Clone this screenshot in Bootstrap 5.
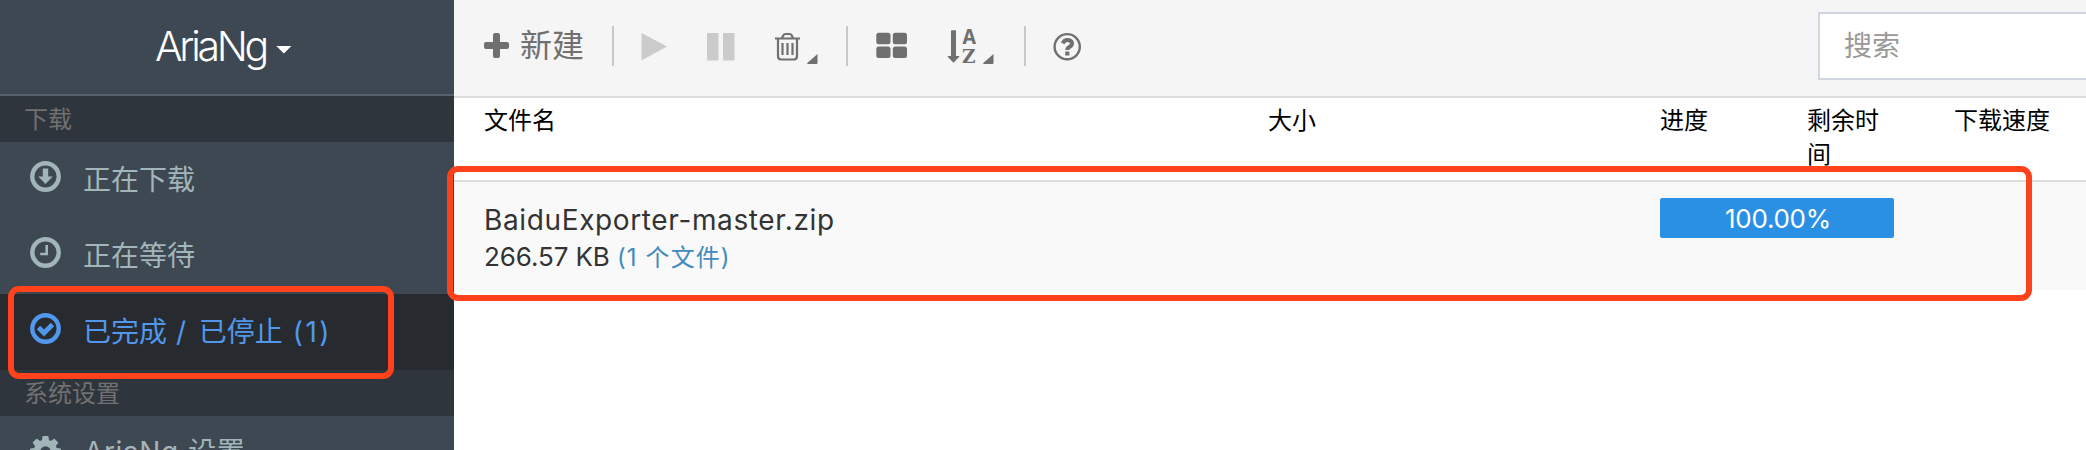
<!DOCTYPE html>
<html lang="zh-CN">
<head>
<meta charset="utf-8">
<title>AriaNg</title>
<link rel="stylesheet" href="https://cdn.jsdelivr.net/npm/bootstrap@5.3.0/dist/css/bootstrap.min.css">
<style>
html,body{height:450px;overflow:hidden}
body{font-family:Inter,"Noto Sans CJK SC",sans-serif;font-size:28px;line-height:40px;color:#333;background:#fff}
svg{display:block;flex:none}
.app{height:450px}
.side{width:454px;background:#3d4852}
.logo{height:96px;border-bottom:2px solid #56606f;color:#fff;font-family:Inter,sans-serif;font-weight:300;font-size:41px}
.brand-name{padding-left:155px;letter-spacing:-3.3px;line-height:92px;margin-top:-2px}
.tri{width:16px;height:8px;margin:5px 0 0 10px;background:#fff;clip-path:polygon(0 0,100% 0,50% 100%)}
.sect{height:46px;line-height:44px;padding-left:24px;background:#2f353d;color:#717171;font-size:24px;font-family:"Noto Sans CJK SC",sans-serif}
.item{height:76px;padding-left:30px;color:#a2b5b9}
.item > span{padding-left:22px;line-height:72px;white-space:pre;word-spacing:1px}
.item svg{margin-top:-7px}
.item.on{background:#272b2f;color:#5197eb}
.slash{letter-spacing:4px}
.count{letter-spacing:2.5px;margin-left:1px}
.item.last{height:34px;overflow:hidden;align-items:flex-start}
.item.last svg{margin-top:20px}
.item.last span{letter-spacing:.6px;padding-left:23px}
.bar{height:98px;background:#f5f5f5;border-bottom:2px solid #dcdcdc;color:#707070;padding-left:30px}
.tools{padding-top:26px}
.new{font-size:32px;line-height:40px;margin:0 28px 0 11px}
.sep{width:2px;height:40px;background:#c8c8c8}
.off{color:#cbcbcb}
.find{width:268px;height:68px;margin-top:12px;border:2px solid #d0d6df;border-right:0;border-radius:0;padding:0 24px;font-size:28px;color:#999}
.find::placeholder{color:#999;opacity:1}
.cols{display:grid;grid-template-columns:784px 392px 147px 147px 1fr;padding-left:30px}
.heads{height:84px;border-bottom:2px solid #dcdcdc;padding-top:6px;color:#000;font-size:24px;line-height:34px}
.heads div{padding-right:60px}
.heads div:last-child{padding:0}
.task{height:108px;background:#f9f9f9}
.fname{padding-top:18px;line-height:40px;letter-spacing:.63px}
.fsize{font-size:26px;line-height:34px;letter-spacing:-.1px}
.fsize a{font-size:24px;letter-spacing:1.1px;color:#428bbc;text-decoration:none}
.progress{width:234px;height:40px;margin-top:16px;border-radius:3px;background:#2a90e4;font-size:26px}
.progress-bar{background:#2a90e4;letter-spacing:-.3px;padding:1px 0 0 2px}
.ring{position:absolute;border:6px solid #ff411c;border-radius:11px;pointer-events:none}
.r1{left:8px;top:286px;width:386px;height:93px}
.r2{left:447px;top:166px;width:1585px;height:135px}
</style>
<script src="https://cdn.jsdelivr.net/npm/bootstrap@5.3.0/dist/js/bootstrap.bundle.min.js"></script>
</head>
<body>
<div class="app d-flex position-relative overflow-hidden">
<aside class="side flex-shrink-0">
 <div class="logo d-flex align-items-center"><span class="brand-name">AriaNg</span><i class="tri"></i></div>
 <div class="sect">下载</div>
 <div class="item d-flex align-items-center"><svg width="31" height="31" viewBox="0 0 31 31"><circle cx="15.5" cy="15.5" r="13.2" fill="none" stroke="currentColor" stroke-width="4.4"/><path d="M12.800 7.500h5.400v8h4.500L15.500 23 8.300 15.500h4.500z" fill="currentColor"/></svg><span>正在下载</span></div>
 <div class="item d-flex align-items-center"><svg width="31" height="31" viewBox="0 0 31 31"><circle cx="15.500" cy="15.500" r="13.200" fill="none" stroke="currentColor" stroke-width="4.400"/><path d="M16.700 8v9h-6.500" fill="none" stroke="currentColor" stroke-width="2.600"/></svg><span>正在等待</span></div>
 <div class="item on d-flex align-items-center"><svg width="31" height="31" viewBox="0 0 31 31"><circle cx="15.500" cy="15.500" r="13.200" fill="none" stroke="currentColor" stroke-width="4.400"/><path d="M8.500 14.500l5.500 5.500 8.500-8.500" fill="none" stroke="currentColor" stroke-width="4.800"/></svg><span>已完成 <span class="slash">/</span> 已停止 <span class="count">(1)</span></span></div>
 <div class="sect">系统设置</div>
 <div class="item last d-flex"><svg width="31" height="31" viewBox="0 0 1536 1536"><path fill="currentColor" d="M1024 768q0-106-75-181t-181-75-181 75-75 181 75 181 181 75 181-75 75-181zm512-109v222q0 12-8 23t-20 13l-185 28q-19 54-39 91 35 50 107 138 10 12 10 25t-9 23q-27 37-99 108t-94 71q-12 0-26-9l-138-108q-44 23-91 38-16 136-29 186-7 28-36 28H657q-14 0-24.500-8.500T621 1506l-28-184q-49-16-90-37l-141 107q-10 9-25 9-14 0-25-11-126-114-165-168-7-10-7-23 0-12 8-23 15-21 51-66.500t54-70.500q-27-50-41-99L29 913q-13-2-21-12.500T0 877V655q0-12 8-23t19-13l186-28q14-46 39-92-40-57-107-138-10-12-10-24 0-10 9-23 26-36 98.500-107.500T337 135q13 0 26 10l138 107q44-23 91-38 16-136 29-186 7-28 36-28h222q14 0 24.500 8.500T915 30l28 184q49 16 90 37l142-107q9-9 24-9 13 0 25 10 129 119 165 170 7 8 7 22 0 12-8 23-15 21-51 66.500t-54 70.500q26 50 41 98l183 28q13 2 21 12.500t8 23.500z"/></svg><span>AriaNg 设置</span></div>
</aside>
<main class="flex-grow-1">
 <div class="bar d-flex justify-content-between align-items-start">
  <div class="tools d-flex align-items-start">
   <svg width="25" height="40" viewBox="484 26 25 40"><path d="M493 35q0-2 2-2h3q2 0 2 2v7h7q2 0 2 2v3q0 2-2 2h-7v7q0 2-2 2h-3q-2 0-2-2v-7h-7q-2 0-2-2v-3q0-2 2-2h7z" fill="currentColor"/></svg>
   <span class="new">新建</span>
   <i class="sep"></i>
   <svg class="off" width="232" height="40" viewBox="614 26 232 40">
    <path d="M641.500 33v27.500L667 46.500z" fill="currentColor"/>
    <path d="M708 33h9.500q1 0 1 1v25.500q0 1-1 1H708q-1 0-1-1V34q0-1 1-1zM724 33h9.500q1 0 1 1v25.500q0 1-1 1H724q-1 0-1-1V34q0-1 1-1z" fill="currentColor"/>
    <g fill="none" stroke="#707070" stroke-width="2.200"><path d="M775 38.500h25M782 38l1.500-3q.6-1 2-1h4q1.400 0 2 1l1.500 3M778 38.500V56q0 3.500 3 3.500h13q3 0 3-3.500V38.500M782.500 43v12M787.500 43v12M792.500 43v12"/></g>
    <path d="M817.500 54v9q0 1-1 1h-9q-.8-.5 0-1.200z" fill="#707070"/>
   </svg>
   <i class="sep"></i>
   <svg width="176" height="40" viewBox="848 26 176 40" fill="currentColor">
    <rect x="876.300" y="32.700" width="14.200" height="11.600" rx="2.500"/><rect x="892.800" y="32.700" width="14.200" height="11.600" rx="2.500"/><rect x="876.300" y="46.500" width="14.200" height="11.600" rx="2.500"/><rect x="892.800" y="46.500" width="14.200" height="11.600" rx="2.500"/>
    <path d="M951 31q0-.7.700-.7h3.600q.7 0 .7.700v25h2.800q1 .2.300 1l-5.600 5.800-5.600-5.800q-.7-.8.300-1h2.800z"/>
    <text x="962.500" y="44" font-family="Liberation Mono" font-weight="700" font-size="22.500" textLength="13.500" lengthAdjust="spacingAndGlyphs">A</text>
    <text x="962" y="63" font-family="DejaVu Serif" font-weight="700" font-size="18.500" textLength="13.500" lengthAdjust="spacingAndGlyphs">Z</text>
    <path d="M993.500 54v9q0 1-1 1h-9q-.8-.5 0-1.200z"/>
   </svg>
   <i class="sep"></i>
   <svg width="60" height="40" viewBox="1026 26 60 40" fill="none" stroke="currentColor"><circle cx="1067.200" cy="46.700" r="12.600" stroke-width="2.400"/><path d="M1062.700 43.300q1.700-3.500 5-3.300 4.300.5 4.300 3.500 0 2-2.300 3.300-2.400 1.300-2.400 3.200" stroke-width="4"/><path d="M1067.300 51.500v4" stroke-width="4.200"/></svg>
  </div>
  <input class="find form-control" type="text" placeholder="搜索">
 </div>
 <div class="cols heads"><div>文件名</div><div>大小</div><div>进度</div><div>剩余时间</div><div>下载速度</div></div>
 <div class="cols task"><div><div class="fname">BaiduExporter-master.zip</div><div class="fsize">266.57 KB <a href="#">(1 个文件)</a></div></div><div></div><div><div class="progress"><div class="progress-bar w-100">100.00%</div></div></div></div>
</main>
<div class="ring r1"></div><div class="ring r2"></div>
</div>
</body>
</html>
